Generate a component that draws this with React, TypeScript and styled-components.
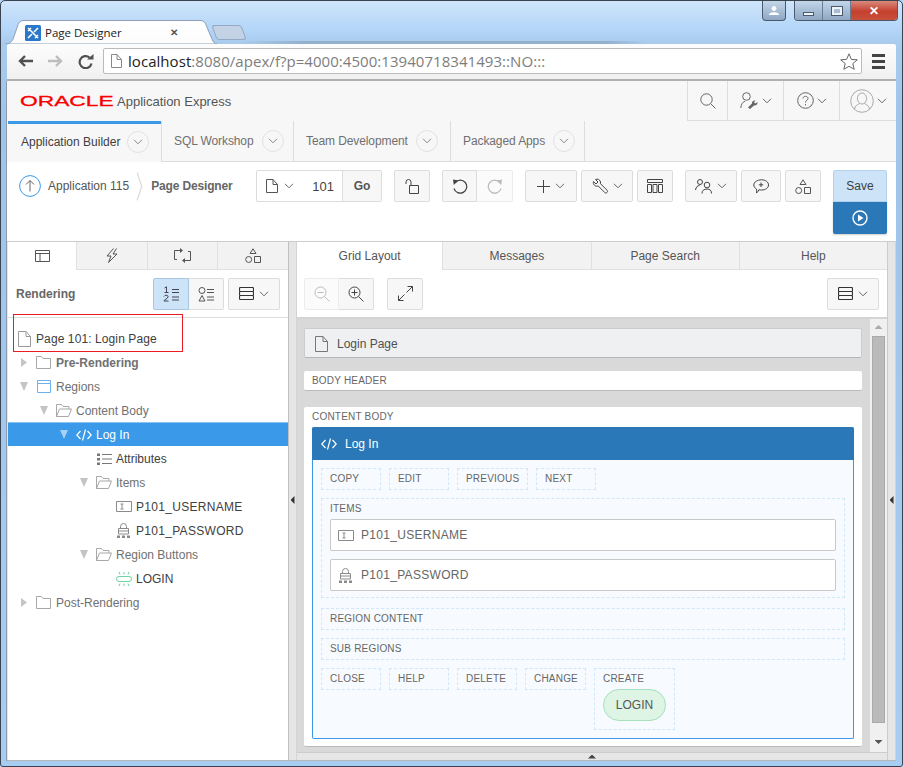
import React from "react";
import styled, { createGlobalStyle } from "styled-components";

const GlobalStyle = createGlobalStyle`
  html, body {
    margin: 0;
    padding: 0;
    background: #b5d6f9;
  }

  * {
    box-sizing: border-box;
  }

  body {
    font-family: "Liberation Sans", Arial, sans-serif;
    font-size: 12px;
    color: #404040;
  }
`;

// icons
const Svg: React.FC<{ w: number; h: number; children: React.ReactNode; color?: string; sw?: number }> = ({
  w,
  h,
  children,
  color = "currentColor",
  sw = 1,
}) => (
  <svg width={w} height={h} viewBox={`0 0 ${w} ${h}`} fill="none" stroke={color} strokeWidth={sw} style={{ display: "block", flex: "none" }}>
    {children}
  </svg>
);

const Chevron = ({ color = "#666" }: { color?: string }) => (
  <Svg w={10} h={6} color={color}>
    <path d="M1 .8 5 4.8 9 .8" />
  </Svg>
);

const PageIcon = ({ color = "#666", w = 13, h = 16 }: { color?: string; w?: number; h?: number }) => (
  <Svg w={w} h={h} color={color}>
    <path d={`M.5.5H${w - 5}L${w - 0.5} 5.5V${h - 0.5}H.5Z M${w - 5} .5V5.5H${w - 0.5}`} />
  </Svg>
);

const FolderIcon = () => (
  <Svg w={15} h={13} color="#a8a8a8">
    <path d="M.5 12.5V.5H5.5L7 2.5H14.5V12.5Z" />
  </Svg>
);

const FolderOpenIcon = () => (
  <Svg w={16} h={13} color="#a8a8a8">
    <path d="M.5 12.5V.5H5.5L7 2.5H13V5M.5 12.5H12.5L15.5 5H3.5L.5 12.5Z" />
  </Svg>
);

const RegionIcon = () => (
  <Svg w={15} h={13} color="#6cb2ee">
    <path d="M1.5.5H14.5V12.5H1.5Z M1.5 3.5H14.5" />
  </Svg>
);

const CodeIcon = ({ color = "#fff" }: { color?: string }) => (
  <Svg w={16} h={12} color={color} sw={1.2}>
    <path d="M4.5 2 .8 6 4.5 10M11.5 2 15.2 6 11.5 10M9.5.5 6.5 11.5" />
  </Svg>
);

const AttributesIcon = () => (
  <Svg w={16} h={12} color="#777">
    <path d="M6 1.5H16M6 6H16M6 10.5H16" />
    <path d="M1 .5H4V3H1ZM1 5H4V7.5H1ZM1 9.5H4V12H1Z" fill="#777" stroke="none" />
  </Svg>
);

const FieldIcon = () => (
  <Svg w={16} h={11} color="#8a8a8a">
    <path d="M.5.5H15.5V10.5H.5Z" />
    <path d="M4.5 3H7.5M6 3V8M4.5 8H7.5" />
  </Svg>
);

const LockIcon = () => (
  <Svg w={14} h={15} color="#8a8a8a">
    <path d="M2.5 11V5.5H12.5V11H2.5ZM4.5 5.5V3.5A3 3 0 0 1 10.5 3.5V5.5M2.5 8H12.5" />
    <path d="M1 12.5H4V15H1ZM6 12.5H9V15H6ZM11 12.5H14V15H11Z" fill="#8a8a8a" stroke="none" />
  </Svg>
);

const ButtonIcon = () => (
  <Svg w={16} h={14} color="#6fd2a0">
    <rect x=".5" y="4.5" width="15" height="5" rx="2.5" />
    <path d="M3 0 4 2.5M8 0V2.5M13 0 12 2.5M3 14 4 11.5M8 14V11.5M13 14 12 11.5" />
  </Svg>
);

const TreeViewIcon = () => (
  <Svg w={15} h={12} color="#555">
    <path d="M.5.5H14.5V11.5H.5ZM.5 3.5H14.5M5 3.5V11.5" />
  </Svg>
);

const BoltIcon = () => (
  <Svg w={14} h={15} color="#555">
    <path d="M8.5.5 2 8H6L3.5 14.5 12 6H8L11.5.5" />
  </Svg>
);

const SwapIcon = () => (
  <Svg w={17} h={15} color="#555">
    <path d="M6 2.5H.5V11.5H3M11 12.5H16.5V3.5H14" />
    <path d="M6 0 9 2.5 6 5ZM11 10 8 12.5 11 15Z" fill="#555" stroke="none" />
  </Svg>
);

const ShapesIcon = () => (
  <Svg w={16} h={15} color="#555">
    <path d="M8 .8 11 5.5H5ZM9.5 8.5H15.5V14.5H9.5Z" />
    <circle cx="3.7" cy="11.5" r="3" />
  </Svg>
);

const OrderIcon = ({ color }: { color: string }) => (
  <Svg w={16} h={16} color={color}>
    <path d="M9 3.5H16M9 6.5H16M9 11H16M9 14H16" />
    <path d="M1.5 2 3.5 .8V6.5M1.5 6.5H5.5M1 10.5C2 8.5 5.5 9 5 11S1 13.5 1 15H5.5" />
  </Svg>
);

const CompIcon = () => (
  <Svg w={16} h={16} color="#555">
    <path d="M9 3.5H16M9 6.5H16M9 11H16M9 14H16" />
    <circle cx="4" cy="4.5" r="3" />
    <path d="M4 9.5 7 15H1Z" />
  </Svg>
);

const RowsIcon = () => (
  <Svg w={15} h={13} color="#333" sw={1.1}>
    <rect x=".5" y=".5" width="14" height="4" rx="1" />
    <rect x=".5" y="4.5" width="14" height="4" rx="1" />
    <rect x=".5" y="8.5" width="14" height="4" rx="1" />
  </Svg>
);

const ZoomIcon = ({ plus, color }: { plus?: boolean; color: string }) => (
  <Svg w={16} h={16} color={color}>
    <circle cx="6.5" cy="6.5" r="5.5" />
    <path d="M10.5 10.5 15.5 15.5M3.5 6.5H9.5" />
    {plus && <path d="M6.5 3.5V9.5" />}
  </Svg>
);

const ExpandIcon = () => (
  <Svg w={15} h={15} color="#444">
    <path d="M9.5.5H14.5V5.5M14.5.5 8.5 6.5M.5 9.5V14.5H5.5M.5 14.5 6.5 8.5" />
  </Svg>
);

const LockOpenIcon = () => (
  <Svg w={14} h={15} color="#444">
    <path d="M4.5 6.5H13.5V14.5H4.5ZM1 5V3A2.5 2.5 0 0 1 6 3V6.5" />
  </Svg>
);

const UndoIcon = ({ color, flip }: { color: string; flip?: boolean }) => (
  <span style={{ transform: flip ? "scaleX(-1)" : undefined, display: "block" }}>
    <Svg w={16} h={15} color={color} sw={1.2}>
      <path d="M3.2 3.5A6.5 6.5 0 1 1 2 9.5" />
      <path d="M1 .5 6.5 1.5 1.8 6Z" fill={color} stroke="none" />
    </Svg>
  </span>
);

const PlusIcon = () => (
  <Svg w={13} h={13} color="#444">
    <path d="M6.5 0V13M0 6.5H13" />
  </Svg>
);

const WrenchIcon = () => (
  <Svg w={16} h={16} color="#444">
    <path d="M1.5 3.5 4 6 6 4 3.5 1.5C5.5.5 8 1.5 8.5 4 8.6 4.6 8.6 5.2 8.5 5.7L15 12.2C15.7 13 15.6 13.8 15 14.5 14.3 15.2 13.4 15.2 12.7 14.5L6.3 8C3.5 9 .5 6.5 1.5 3.5Z" />
  </Svg>
);

const ColumnsIcon = () => (
  <Svg w={16} h={14} color="#444">
    <path d="M.5.5H15.5V3.5H.5ZM.5 5.5H4.5V13.5H.5ZM6 5.5H10V13.5H6ZM11.5 5.5H15.5V13.5H11.5Z" />
  </Svg>
);

const PeopleIcon = () => (
  <Svg w={17} h={15} color="#444">
    <circle cx="5" cy="3" r="2.5" />
    <circle cx="12" cy="6" r="2.8" />
    <path d="M.5 11C1 8 2.5 6.5 4.5 6.5M7 14.5C7 11.5 9 10 12 10S16.5 11.5 16.5 14.5" />
  </Svg>
);

const CommentIcon = () => (
  <Svg w={16} h={15} color="#444">
    <path d="M8.5.8C12.5.8 15.5 3 15.5 6S12.5 11 8.5 11C7.5 11 6.8 11 6 10.7 5.5 12 4.5 13.3 3.5 14 3.8 12.8 3.8 11 3.5 10 1.8 9 .8 7.7.8 6 .8 3 4.5.8 8.5.8Z" />
    <path d="M8 3.5V8M5.8 5.8H10.2" />
  </Svg>
);

const SearchIcon = () => (
  <Svg w={16} h={16} color="#666">
    <circle cx="6.5" cy="6.5" r="5.7" />
    <path d="M10.7 10.7 15.5 15.5" />
  </Svg>
);

const BuilderUserIcon = () => (
  <Svg w={19} h={18} color="#666">
    <circle cx="6.5" cy="4.5" r="3.8" />
    <path d="M.8 16C1 12.5 2.5 10 5 9.3" />
    <path d="M8 15.5 12 11.5C11.5 9.5 13.5 8 15.5 8.5L14 10.3 15.5 11.5 17.5 10C18 12 16 14 14 13.5L10 17Z" fill="#666" stroke="none" />
  </Svg>
);

const HelpIcon = () => (
  <Svg w={17} h={17} color="#666">
    <circle cx="8.5" cy="8.5" r="7.8" />
    <path d="M6 6.5C6 3.6 11 3.6 11 6.5 11 8.2 8.5 8.2 8.5 10.5M8.5 12V13.3" />
  </Svg>
);

const AvatarIcon = () => (
  <Svg w={24} h={24} color="#aaa">
    <circle cx="12" cy="12" r="11.3" />
    <ellipse cx="12" cy="9.5" rx="4.6" ry="5.5" />
    <path d="M4.5 20C5 17 7 15.8 9.5 14.5M19.5 20C19 17 17 15.8 14.5 14.5" />
  </Svg>
);

const UpCircleIcon = () => (
  <Svg w={22} h={22} color="#3b99e8">
    <circle cx="11" cy="11" r="10.4" />
    <path d="M11 16.5V5.5M7 9.5 11 5.5 15 9.5" stroke="#666" />
  </Svg>
);

const PlayIcon = () => (
  <Svg w={16} h={16} color="#fff" sw={1.4}>
    <circle cx="8" cy="8" r="7" />
    <path d="M6 4.5 11.5 8 6 11.5Z" fill="#fff" stroke="none" />
  </Svg>
);

const BackIcon = ({ color }: { color: string }) => (
  <Svg w={15} h={12} color={color} sw={2.4}>
    <path d="M15 6H3M7 1 2 6 7 11" />
  </Svg>
);

const ReloadIcon = () => (
  <Svg w={16} h={15} color="#505050" sw={2.2}>
    <path d="M13.5 9.5A6 6 0 1 1 11.5 3.5" />
    <path d="M9 5.5H15.5V0Z" fill="#505050" stroke="none" />
  </Svg>
);

const StarIcon = () => (
  <Svg w={18} h={17} color="#666">
    <path d="M9 .8 11.4 6.4 17.3 6.8 12.8 10.6 14.2 16.3 9 13.3 3.8 16.3 5.2 10.6.7 6.8 6.6 6.4Z" />
  </Svg>
);

const AppLogo = () => (
  <LogoMark width="16" height="16" viewBox="0 0 16 16">
    <rect width="16" height="16" rx="1.5" fill="#2a78c8" />
    <path d="M3 3 13 13M3 13 7 9M9 7 13 3M3 6 6 3M10 13 13 10" stroke="#fff" strokeWidth="1.6" fill="none" />
  </LogoMark>
);

const WinUserIcon = () => (
  <Svg w={10} h={9} color="#fff">
    <circle cx="5" cy="2.5" r="2" fill="#fff" />
    <path d="M0 9C0 6 10 6 10 9Z" fill="#fff" />
  </Svg>
);

const TabOutline = () => (
  <TabShape width="212" height="24" viewBox="0 0 212 25" preserveAspectRatio="none">
    <path d="M.5 25C6 25 8 21 9 17L13 5C14 2 16 .5 19 .5H195C198 .5 200 2 201 5L207 20C208 23 210 25 212 25Z" fill="url(#tabFill)" stroke="#8c9db3" />
    <defs>
      <linearGradient id="tabFill" x1="0" y1="0" x2="0" y2="1">
        <stop offset="0" stopColor="#fff" />
        <stop offset="1" stopColor="#fcfcfc" />
      </linearGradient>
    </defs>
  </TabShape>
);

const treeRows = [
  { level: 0, text: "Page 101: Login Page", icon: <PageIcon color="#999" />, kind: "page" },
  { level: 1, text: "Pre-Rendering", icon: <FolderIcon />, toggle: "closed", kind: "bold" },
  { level: 1, text: "Regions", icon: <RegionIcon />, toggle: "open", kind: "folder" },
  { level: 2, text: "Content Body", icon: <FolderOpenIcon />, toggle: "open", kind: "folder" },
  { level: 3, text: "Log In", icon: <CodeIcon />, toggle: "open", kind: "selected" },
  { level: 4, text: "Attributes", icon: <AttributesIcon />, kind: "leaf" },
  { level: 4, text: "Items", icon: <FolderOpenIcon />, toggle: "open", kind: "folder" },
  { level: 5, text: "P101_USERNAME", icon: <FieldIcon />, kind: "item" },
  { level: 5, text: "P101_PASSWORD", icon: <LockIcon />, kind: "item" },
  { level: 4, text: "Region Buttons", icon: <FolderOpenIcon />, toggle: "open", kind: "folder" },
  { level: 5, text: "LOGIN", icon: <ButtonIcon />, kind: "leaf" },
  { level: 1, text: "Post-Rendering", icon: <FolderIcon />, toggle: "closed", kind: "folder" },
];

const App: React.FC = () => {
  return (
    <Frame>
      <GlobalStyle />
      <TabStrip>
        <BrowserTab>
          <TabOutline />
          <AppLogo />
          <TabTitle>Page Designer</TabTitle>
          <TabClose>✕</TabClose>
        </BrowserTab>
        <NewTab />
        <WinControls>
          <WinUser>
            <WinUserIcon />
          </WinUser>
          <WinButtons>
            <WinBtn>
              <WinMin />
            </WinBtn>
            <WinBtn>
              <WinMax />
            </WinBtn>
            <WinClose>✕</WinClose>
          </WinButtons>
        </WinControls>
      </TabStrip>

      <BrowserBar>
        <NavIcons>
          <BackIcon color="#505050" />
          <Flip>
            <BackIcon color="#bdbdbd" />
          </Flip>
          <ReloadIcon />
        </NavIcons>
        <Omnibox>
          <PageIcon color="#888" w={11} h={14} />
          <Url>
            <b>localhost</b>:8080/apex/f?p=4000:4500:13940718341493::NO:::
          </Url>
          <StarIcon />
        </Omnibox>
        <Burger>
          <i />
          <i />
          <i />
        </Burger>
      </BrowserBar>

      <Page>
        <AppHeader>
          <Logo>
            <OracleMark>ORACLE</OracleMark>
            <LogoText>Application Express</LogoText>
          </Logo>
          <HeaderActions>
            <HeaderItem $w={40}>
              <SearchIcon />
            </HeaderItem>
            <HeaderItem $w={56}>
              <BuilderUserIcon />
              <Chevron />
            </HeaderItem>
            <HeaderItem $w={56}>
              <HelpIcon />
              <Chevron />
            </HeaderItem>
            <HeaderItem $w={57}>
              <AvatarIcon />
              <Chevron />
            </HeaderItem>
          </HeaderActions>
        </AppHeader>

        <NavTabs>
          {[
            { label: "Application Builder", w: 154, active: true },
            { label: "SQL Workshop", w: 132 },
            { label: "Team Development", w: 157 },
            { label: "Packaged Apps", w: 134 },
          ].map((t) => (
            <NavTab key={t.label} $w={t.w} $active={t.active}>
              {t.label}
              <NavCaret>
                <Chevron color="#888" />
              </NavCaret>
            </NavTab>
          ))}
          <NavRest />
        </NavTabs>

        <Toolbar>
          <Crumbs>
            <UpCircleIcon />
            <CrumbLink>Application 115</CrumbLink>
            <CrumbSep />
            <CrumbCurrent>Page Designer</CrumbCurrent>
          </Crumbs>

          <PageGroup>
            <PagePicker>
              <PageIcon color="#555" w={12} h={14} />
              <Chevron />
              <PageNumber>101</PageNumber>
            </PagePicker>
            <GoButton>Go</GoButton>
          </PageGroup>

          <ToolButton $w={36} $ml={12}>
            <LockOpenIcon />
          </ToolButton>
          <ToolButton $w={35} $ml={12} $joinRight>
            <UndoIcon color="#444" />
          </ToolButton>
          <ToolButton $w={36} $joinLeft $off>
            <UndoIcon color="#bbb" flip />
          </ToolButton>
          <ToolButton $w={52} $ml={12}>
            <PlusIcon />
            <Chevron />
          </ToolButton>
          <ToolButton $w={52} $ml={4}>
            <WrenchIcon />
            <Chevron />
          </ToolButton>
          <ToolButton $w={36} $ml={4}>
            <ColumnsIcon />
          </ToolButton>
          <ToolButton $w={52} $ml={12}>
            <PeopleIcon />
            <Chevron />
          </ToolButton>
          <ToolButton $w={40} $ml={4}>
            <CommentIcon />
          </ToolButton>
          <ToolButton $w={36} $ml={4}>
            <ShapesIcon />
          </ToolButton>

          <SaveStack>
            <SaveButton>Save</SaveButton>
            <RunButton>
              <PlayIcon />
            </RunButton>
          </SaveStack>
        </Toolbar>

        <Designer>
          <LeftPanel>
            <PanelTabs>
              <PanelTab $active $grow={69}>
                <TreeViewIcon />
              </PanelTab>
              <PanelTab $grow={70}>
                <BoltIcon />
              </PanelTab>
              <PanelTab $grow={70}>
                <SwapIcon />
              </PanelTab>
              <PanelTab $grow={71}>
                <ShapesIcon />
              </PanelTab>
            </PanelTabs>
            <RenderBar>
              <RenderTitle>Rendering</RenderTitle>
              <ToolButton $w={36} $joinRight $on>
                <OrderIcon color="#445" />
              </ToolButton>
              <ToolButton $w={35} $joinLeft>
                <CompIcon />
              </ToolButton>
              <ToolButton $w={52} $ml={4} $mr={8}>
                <RowsIcon />
                <Chevron />
              </ToolButton>
            </RenderBar>
            <Tree>
              {treeRows.map((r) => (
                <TreeRow key={r.text} $level={r.level} $selected={r.kind === "selected"}>
                  {r.level > 0 && <Toggle $state={r.toggle} $selected={r.kind === "selected"} />}
                  <IconSlot $page={r.kind === "page"}>{r.icon}</IconSlot>
                  <TreeLabel $kind={r.kind}>{r.text}</TreeLabel>
                </TreeRow>
              ))}
            </Tree>
            <Highlight />
          </LeftPanel>

          <Splitter>
            <ArrowLeft />
          </Splitter>

          <RightPanel>
            <PanelTabs>
              <PanelTab $active $grow={146}>Grid Layout</PanelTab>
              <PanelTab $grow={148}>Messages</PanelTab>
              <PanelTab $grow={148}>Page Search</PanelTab>
              <PanelTab $grow={148}>Help</PanelTab>
            </PanelTabs>
            <GridBar>
              <ToolButton $w={35} $joinRight $off>
                <ZoomIcon color="#bbb" />
              </ToolButton>
              <ToolButton $w={35} $joinLeft>
                <ZoomIcon plus color="#444" />
              </ToolButton>
              <ToolButton $w={36} $ml={13}>
                <ExpandIcon />
              </ToolButton>
              <ToolButton $w={52} $ml="auto">
                <RowsIcon />
                <Chevron />
              </ToolButton>
            </GridBar>
            <GridArea>
              <Canvas>
                <PageBar>
                  <PageIcon color="#777" />
                  Login Page
                </PageBar>
                <BodyHeader>BODY HEADER</BodyHeader>
                <ContentCard>
                  <CardLabel>CONTENT BODY</CardLabel>
                  <Region>
                    <RegionHead>
                      <CodeIcon />
                      Log In
                    </RegionHead>
                    <RegionBody>
                      <SlotRow>
                        <Slot $w={60}>COPY</Slot>
                        <Slot $w={60}>EDIT</Slot>
                        <Slot $w={71}>PREVIOUS</Slot>
                        <Slot $w={60}>NEXT</Slot>
                      </SlotRow>
                      <ItemsBox>
                        <ItemsLabel>ITEMS</ItemsLabel>
                        <ItemField>
                          <ItemIcon>
                            <FieldIcon />
                          </ItemIcon>
                          P101_USERNAME
                        </ItemField>
                        <ItemField>
                          <ItemIcon>
                            <LockIcon />
                          </ItemIcon>
                          P101_PASSWORD
                        </ItemField>
                      </ItemsBox>
                      <Slot $mt={10}>REGION CONTENT</Slot>
                      <Slot $mt={8}>SUB REGIONS</Slot>
                      <SlotRow $mt={8}>
                        <Slot $w={60}>CLOSE</Slot>
                        <Slot $w={60}>HELP</Slot>
                        <Slot $w={60}>DELETE</Slot>
                        <Slot $w={61}>CHANGE</Slot>
                        <CreateSlot>
                          CREATE
                          <LoginPill>LOGIN</LoginPill>
                        </CreateSlot>
                      </SlotRow>
                    </RegionBody>
                  </Region>
                </ContentCard>
              </Canvas>
              <Scrollbar>
                <ArrowUp $color="#aaa" />
                <Thumb />
                <ArrowDown />
              </Scrollbar>
            </GridArea>
            <BottomSplitter>
              <ArrowUp $color="#444" />
            </BottomSplitter>
          </RightPanel>

          <Splitter $narrow>
            <ArrowLeft />
          </Splitter>
        </Designer>
      </Page>
    </Frame>
  );
};

export default App;

// style
const Frame = styled.div`
  width: 903px;
  height: 767px;
  overflow: hidden;
  display: flex;
  flex-direction: column;
  padding: 0 6px 5px;
  background: linear-gradient(180deg, #cfe5fa 0, #b4d6f9 28px, #a9cbed 42px, #9fc4ea 120px, #a8cdf3 100%);
  border: 1px solid #3a4450;
  border-radius: 5px 5px 3px 3px;
`;

const TabStrip = styled.div`
  height: 43px;
  flex: none;
  display: flex;
  align-items: flex-end;
  margin-left: -2px;
  background: linear-gradient(
      90deg,
      transparent 235px,
      rgba(90, 105, 120, 0.28) 300px,
      rgba(90, 105, 120, 0.28) 600px,
      transparent 640px
    )
    bottom / 100% 3px no-repeat;
`;

const BrowserTab = styled.div`
  position: relative;
  width: 212px;
  height: 24px;
  flex: none;
  display: flex;
  align-items: center;
  padding: 1px 0 0 20px;
`;

const TabShape = styled.svg`
  position: absolute;
  left: 0;
  top: 0;
`;

const LogoMark = styled.svg`
  position: relative;
  display: block;
  flex: none;
`;

const TabTitle = styled.span`
  position: relative;
  margin-left: 4px;
  font: 11.5px "Open Sans", sans-serif;
  color: #222;
  width: 125px;
`;

const TabClose = styled.span`
  position: relative;
  font-size: 10px;
  font-weight: bold;
  color: #555;
`;

const NewTab = styled.div`
  width: 30px;
  height: 15px;
  margin: 0 0 4px -3px;
  background: #c3d2e5;
  border: 1px solid #93a9c3;
  border-radius: 3px;
  transform: skewX(20deg);
`;

const WinControls = styled.div`
  align-self: flex-start;
  margin-left: auto;
  margin-right: -2px;
  display: flex;
  gap: 8px;
`;

const WinUser = styled.div`
  width: 24px;
  height: 20px;
  display: flex;
  align-items: center;
  justify-content: center;
  background: linear-gradient(180deg, #c2d6ea, #8ea7c2);
  border: 1px solid #4b5a6b;
  border-top: 0;
  border-radius: 0 0 4px 4px;
`;

const WinButtons = styled.div`
  display: flex;
  height: 20px;
  border: 1px solid #4b5a6b;
  border-top: 0;
  border-radius: 0 0 4px 4px;
  overflow: hidden;
`;

const WinBtn = styled.div`
  width: 28px;
  display: flex;
  align-items: center;
  justify-content: center;
  background: linear-gradient(180deg, #c2d6ea, #8ea7c2);
  border-right: 1px solid #6b7c90;
`;

const WinMin = styled.i`
  width: 11px;
  height: 4px;
  margin-top: 6px;
  background: #eef3f8;
  border: 1px solid #4b5a6b;
`;

const WinMax = styled.i`
  width: 10px;
  height: 8px;
  border: 2px solid #eef3f8;
  outline: 1px solid #4b5a6b;
`;

const WinClose = styled.div`
  width: 46px;
  display: flex;
  align-items: center;
  justify-content: center;
  color: #fff;
  font-size: 12px;
  font-weight: bold;
  background: linear-gradient(180deg, #d98a7c, #c5402e 55%, #c8503c);
`;

const BrowserBar = styled.div`
  height: 37px;
  flex: none;
  display: flex;
  align-items: center;
  padding: 0 11px 1px 0;
  background: linear-gradient(180deg, #fdfdfd, #f0f0f0);
  border-bottom: 2px solid #b0b0b0;
  border-radius: 2px 2px 0 0;
`;

const NavIcons = styled.div`
  width: 96px;
  flex: none;
  display: flex;
  align-items: center;
  gap: 15px;
  padding-left: 11px;
`;

const Flip = styled.span`
  display: block;
  transform: scaleX(-1);
`;

const Omnibox = styled.div`
  width: 759px;
  height: 26px;
  flex: none;
  display: flex;
  align-items: center;
  gap: 6px;
  padding: 0 3px 0 7px;
  background: #fff;
  border: 1px solid #bbb;
  border-radius: 2px;
`;

const Url = styled.span`
  flex: 1;
  font: 15px "Open Sans", sans-serif;
  letter-spacing: 0.05px;
  color: #7d7d7d;
  white-space: nowrap;

  b {
    font-weight: 400;
    color: #222;
  }
`;

const Burger = styled.div`
  margin-left: 10px;
  display: flex;
  flex-direction: column;
  gap: 3px;

  i {
    display: block;
    width: 13px;
    height: 3px;
    background: #444;
  }
`;

const Page = styled.div`
  flex: 1;
  min-height: 0;
  display: flex;
  flex-direction: column;
  background: #f7f7f7;
  box-shadow: -1px 0 0 #8b9bab;
`;

const AppHeader = styled.div`
  height: 40px;
  flex: none;
  display: flex;
  justify-content: space-between;
`;

const Logo = styled.div`
  display: flex;
  align-items: center;
  padding-left: 13px;
`;

const OracleMark = styled.span`
  display: block;
  width: 97px;
  font-size: 15.5px;
  line-height: 14px;
  color: #f80000;
  -webkit-text-stroke: 0.3px #f80000;
  transform: scale(1.47, 1);
  transform-origin: left center;
`;

const LogoText = styled.span`
  font-size: 13px;
  color: #555;
`;

const HeaderActions = styled.div`
  display: flex;
  border-bottom: 1px solid #ddd;
`;

const HeaderItem = styled.div<{ $w: number }>`
  width: ${(p) => p.$w}px;
  display: flex;
  align-items: center;
  justify-content: center;
  gap: 3px;
  border-left: 1px solid #ddd;
`;

const NavTabs = styled.div`
  height: 41px;
  flex: none;
  display: flex;
  padding-left: 1px;
`;

const NavTab = styled.div<{ $w: number; $active?: boolean }>`
  width: ${(p) => p.$w}px;
  flex: none;
  display: flex;
  align-items: center;
  gap: ${(p) => (p.$active ? "7px" : "8px")};
  padding-left: ${(p) => (p.$active ? "13px" : "12px")};
  letter-spacing: ${(p) => (p.$active ? "0" : "-0.1px")};
  color: ${(p) => (p.$active ? "#404040" : "#707070")};
  border-right: 1px solid #ddd;
  border-bottom: ${(p) => (p.$active ? "0" : "1px solid #ddd")};
  ${(p) => p.$active && "box-shadow: inset 0 3px 0 #3b99e8;"}
`;

const NavCaret = styled.span`
  width: 22px;
  height: 22px;
  display: flex;
  align-items: center;
  justify-content: center;
  border: 1px solid #e2e2e2;
  border-radius: 50%;
`;

const NavRest = styled.div`
  flex: 1;
  border-bottom: 1px solid #ddd;
`;

const Toolbar = styled.div`
  height: 80px;
  flex: none;
  display: flex;
  align-items: flex-start;
  padding: 8px 9px 0 12px;
  background: #fff;
  border-bottom: 1px solid #ccc;
`;

const Crumbs = styled.div`
  flex: 1;
  height: 32px;
  display: flex;
  align-items: center;
`;

const CrumbLink = styled.span`
  margin-left: 7px;
  color: #555;
`;

const CrumbSep = styled.span`
  width: 7px;
  height: 7px;
  margin: 0 10px 0 5px;
  transform: scaleY(3) rotate(45deg);
  border-top: 1px solid #ddd;
  border-right: 1px solid #ddd;
`;

const CrumbCurrent = styled.span`
  font-weight: bold;
  letter-spacing: -0.15px;
  color: #666;
`;

const PageGroup = styled.div`
  width: 126px;
  height: 32px;
  flex: none;
  display: flex;
  background: #fff;
  border: 1px solid #dcdcdc;
  border-radius: 2px;
`;

const PagePicker = styled.div`
  flex: 1;
  display: flex;
  align-items: center;
  gap: 6px;
  padding: 0 8px 0 9px;
`;

const PageNumber = styled.span`
  margin-left: auto;
  font-size: 13px;
  color: #444;
`;

const GoButton = styled.div`
  width: 39px;
  display: flex;
  align-items: center;
  justify-content: center;
  font-weight: bold;
  color: #555;
  background: #f7f7f7;
  border-left: 1px solid #dcdcdc;
`;

const ToolButton = styled.div<{
  $w: number;
  $ml?: number | string;
  $mr?: number;
  $joinLeft?: boolean;
  $joinRight?: boolean;
  $off?: boolean;
  $on?: boolean;
}>`
  width: ${(p) => p.$w}px;
  height: 32px;
  flex: none;
  display: flex;
  align-items: center;
  justify-content: center;
  gap: 5px;
  margin-left: ${(p) => (typeof p.$ml === "string" ? p.$ml : `${p.$ml ?? 0}px`)};
  margin-right: ${(p) => p.$mr ?? 0}px;
  background: ${(p) => (p.$on ? "#cce3f8" : p.$off ? "#fbfbfb" : "#f7f7f7")};
  border: 1px solid ${(p) => (p.$on ? "#a9c6e0" : p.$off ? "#ececec" : "#dcdcdc")};
  border-radius: ${(p) => (p.$joinLeft ? "0 2px 2px 0" : p.$joinRight ? "2px 0 0 2px" : "2px")};
  ${(p) => p.$joinLeft && "border-left: 0;"}
`;

const SaveStack = styled.div`
  width: 54px;
  margin-left: 12px;
  flex: none;
`;

const SaveButton = styled.div`
  height: 32px;
  display: flex;
  align-items: center;
  justify-content: center;
  color: #404040;
  background: #cce3f8;
  border: 1px solid #b5d2ec;
  border-radius: 2px 2px 0 0;
`;

const RunButton = styled.div`
  height: 32px;
  display: flex;
  align-items: center;
  justify-content: center;
  background: #2a78b8;
  border-radius: 0 0 2px 2px;
  box-shadow: 0 1px 2px rgba(0, 0, 0, 0.2);
`;

const Designer = styled.div`
  flex: 1;
  min-height: 0;
  display: flex;
  background: #e6e6e6;
  padding-left: 1px;
  border-bottom: 1px solid #b8b8b8;
`;

const LeftPanel = styled.div`
  position: relative;
  width: 280px;
  flex: none;
  display: flex;
  flex-direction: column;
  background: #fff;
`;

const PanelTabs = styled.div`
  height: 28px;
  flex: none;
  display: flex;
  background: #f2f2f2;
  border-bottom: 1px solid #e0e0e0;
`;

const PanelTab = styled.div<{ $active?: boolean; $grow: number }>`
  flex: ${(p) => p.$grow} 1 0;
  display: flex;
  align-items: center;
  justify-content: center;
  color: #555;
  border-right: 1px solid #e0e0e0;
  ${(p) => p.$active && "background: #fff; margin-bottom: -1px;"}

  &:last-child {
    border-right: 0;
  }
`;

const RenderBar = styled.div`
  height: 48px;
  flex: none;
  display: flex;
  align-items: center;
  padding-left: 8px;
  border-bottom: 1px solid #ddd;
`;

const RenderTitle = styled.span`
  flex: 1;
  font-weight: bold;
  color: #666;
`;

const Tree = styled.div`
  padding-top: 8px;
`;

const TreeRow = styled.div<{ $level: number; $selected: boolean }>`
  height: 24px;
  display: flex;
  align-items: center;
  padding: 1px 0 0 ${(p) => Math.max(8, p.$level * 20 - 8)}px;
  background: ${(p) => (p.$selected ? "#3a99e8" : "transparent")};
  ${(p) => p.$selected && "box-shadow: inset 0 1px 0 #88c2f2;"}
`;

const Toggle = styled.i<{ $state?: string; $selected: boolean }>`
  width: 16px;
  height: 9px;
  flex: none;
  ${(p) =>
    p.$state === "open" &&
    `background: ${p.$selected ? "#a8d2f5" : "#c4c4c4"}; width: 8px; margin-right: 8px; clip-path: polygon(0 0, 100% 0, 50% 100%);`}
  ${(p) =>
    p.$state === "closed" &&
    "background: #c4c4c4; width: 6px; margin-right: 9px; margin-left: 1px; clip-path: polygon(0 0, 100% 50%, 0 100%);"}
`;

const IconSlot = styled.span<{ $page?: boolean }>`
  width: 20px;
  flex: none;
  display: flex;
  align-items: center;
  padding-left: ${(p) => (p.$page ? "2px" : "0")};
`;

const TreeLabel = styled.span<{ $kind: string }>`
  font-size: 12px;
  font-weight: ${(p) => (p.$kind === "bold" ? "bold" : "normal")};
  letter-spacing: ${(p) => (p.$kind === "item" ? "0.3px" : p.$kind === "page" ? "0.1px" : "0")};
  color: ${(p) =>
    p.$kind === "selected" ? "#fff" : p.$kind === "bold" || p.$kind === "folder" ? "#707070" : "#404040"};
`;

const Highlight = styled.div`
  position: absolute;
  left: 5px;
  top: 72px;
  width: 170px;
  height: 38px;
  border: 1px solid #ed1c24;
`;

const Splitter = styled.div<{ $narrow?: boolean }>`
  width: 9px;
  flex: none;
  display: flex;
  align-items: center;
  justify-content: center;
  padding-bottom: 2px;
  background: #e6e6e6;
  border-left: 1px solid ${(p) => (p.$narrow ? "#ccc" : "#c0c0c0")};
  border-right: 1px solid #d4d4d4;
`;

const ArrowLeft = styled.i`
  width: 4px;
  height: 8px;
  background: #333;
  clip-path: polygon(100% 0, 0 50%, 100% 100%);
`;

const RightPanel = styled.div`
  width: 590px;
  flex: none;
  display: flex;
  flex-direction: column;
  background: #fff;
`;

const GridBar = styled.div`
  height: 49px;
  flex: none;
  display: flex;
  align-items: center;
  padding: 0 8px 0 7px;
  border-bottom: 2px solid #d4d4d4;
`;

const GridArea = styled.div`
  flex: 1;
  min-height: 0;
  display: flex;
`;

const Canvas = styled.div`
  flex: 1;
  padding: 9px 8px 0 7px;
  background: #d9d9d9;
`;

const PageBar = styled.div`
  height: 30px;
  display: flex;
  align-items: center;
  gap: 9px;
  padding: 1px 0 0 10px;
  font-size: 12px;
  color: #505050;
  background: #eff0f2;
  border: 1px solid #ccc;
  border-bottom-color: #b5b5b5;
  border-radius: 2px;
`;

const BodyHeader = styled.div`
  height: 20px;
  margin-top: 13px;
  padding: 0 8px;
  line-height: 19px;
  font-size: 10px;
  letter-spacing: 0.2px;
  color: #666;
  background: #fff;
  border-bottom: 1px solid #bbb;
  border-radius: 2px;
`;

const ContentCard = styled.div`
  height: 340px;
  margin-top: 16px;
  padding: 0 8px;
  background: #fff;
  border-bottom: 1px solid #bbb;
  border-radius: 2px;
`;

const CardLabel = styled.div`
  height: 20px;
  line-height: 19px;
  font-size: 10px;
  letter-spacing: 0.2px;
  color: #666;
`;

const Region = styled.div`
  height: 312px;
  display: flex;
  flex-direction: column;
  background: #f7fbff;
  border: 1px solid #3a99e8;
  border-top: 0;
  border-radius: 2px;
`;

const RegionHead = styled.div`
  height: 33px;
  flex: none;
  display: flex;
  align-items: center;
  gap: 8px;
  margin: 0 -1px;
  padding-left: 9px;
  color: #fff;
  background: #2a78b8;
  border-radius: 2px 2px 0 0;
`;

const RegionBody = styled.div`
  padding: 8px 8px 0;
`;

const SlotRow = styled.div<{ $mt?: number }>`
  display: flex;
  align-items: flex-start;
  gap: 8px;
  margin-top: ${(p) => p.$mt ?? 0}px;
`;

const Slot = styled.div<{ $w?: number; $mt?: number }>`
  width: ${(p) => (p.$w ? `${p.$w}px` : "auto")};
  height: 22px;
  margin-top: ${(p) => p.$mt ?? 0}px;
  padding-left: 8px;
  line-height: 20px;
  font-size: 10px;
  letter-spacing: 0.2px;
  color: #666;
  border: 1px dashed #d0e7fa;
`;

const ItemsBox = styled.div`
  height: 100px;
  margin-top: 8px;
  padding: 0 8px;
  border: 1px dashed #d0e7fa;
`;

const ItemsLabel = styled.div`
  height: 20px;
  line-height: 20px;
  font-size: 10px;
  letter-spacing: 0.2px;
  color: #666;
`;

const ItemField = styled.div`
  height: 32px;
  display: flex;
  align-items: center;
  margin-bottom: 8px;
  padding-left: 7px;
  letter-spacing: 0.3px;
  color: #666;
  background: #fff;
  border: 1px solid #c8c8c8;
  border-radius: 2px;
`;

const ItemIcon = styled.span`
  width: 23px;
  flex: none;
`;

const CreateSlot = styled.div`
  width: 81px;
  height: 62px;
  padding: 4px 0 0 8px;
  line-height: 12px;
  font-size: 10px;
  letter-spacing: 0.2px;
  color: #666;
  border: 1px dashed #d0e7fa;
`;

const LoginPill = styled.div`
  width: 63px;
  height: 32px;
  margin-top: 4px;
  display: flex;
  align-items: center;
  justify-content: center;
  font-size: 12px;
  letter-spacing: 0;
  color: #555;
  background: #def5e6;
  border: 1px solid #a7e0bd;
  border-radius: 16px;
`;

const Scrollbar = styled.div`
  width: 17px;
  flex: none;
  display: flex;
  flex-direction: column;
  align-items: center;
  padding: 6px 0 8px;
  background: #f0f0f0;
`;

const ArrowUp = styled.i<{ $color: string }>`
  width: 8px;
  height: 4px;
  flex: none;
  background: ${(p) => p.$color};
  clip-path: polygon(50% 0, 100% 100%, 0 100%);
`;

const ArrowDown = styled.i`
  width: 8px;
  height: 4px;
  flex: none;
  background: #555;
  clip-path: polygon(0 0, 100% 0, 50% 100%);
`;

const Thumb = styled.div`
  flex: 1;
  width: 13px;
  margin: 7px 0 17px;
  background: #bababa;
  border: 1px solid #aaa;
`;

const BottomSplitter = styled.div`
  height: 8px;
  flex: none;
  display: flex;
  align-items: center;
  justify-content: center;
  background: #e6e6e6;
  border-top: 1px solid #ccc;
`;
